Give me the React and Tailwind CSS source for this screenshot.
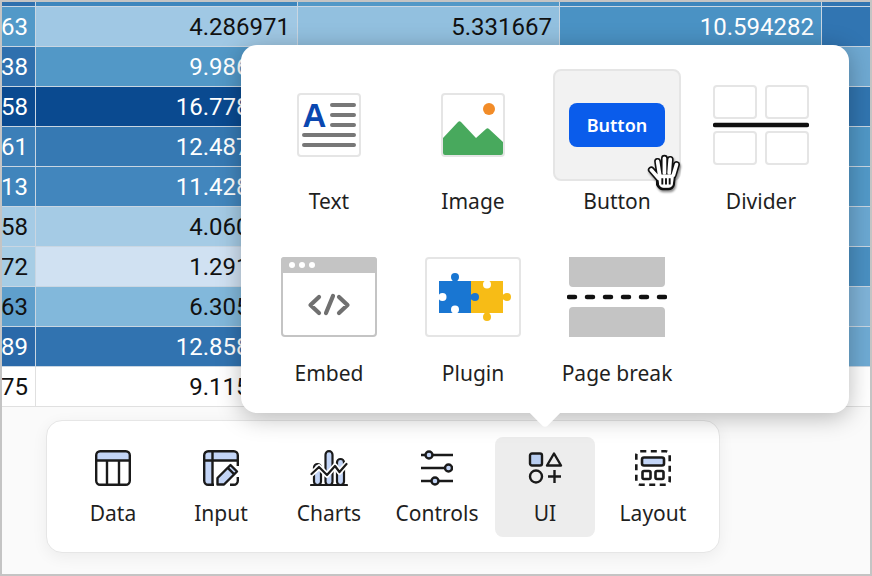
import React from 'react';

const rows = [
  { a: '63', b: '4.286971', c: '5.331667', d: '10.594282', colors: ['#5299c8', '#a0c8e4', '#92c0df', '#4a92c4', '#3175b2'], dark: [1, 0, 0, 1, 1] },
  { a: '38', b: '9.986214', colors: ['#2f70ae', '#5298c7', '#5298c7', '#5298c7', '#6fa9d2'], dark: [1, 1, 1, 1, 1] },
  { a: '58', b: '16.778305', colors: ['#0a4a90', '#0a4a90', '#0a4a90', '#0a4a90', '#3175b0'], dark: [1, 1, 1, 1, 1] },
  { a: '61', b: '12.487120', colors: ['#3c7fb8', '#3679b3', '#3679b3', '#3679b3', '#5097c6'], dark: [1, 1, 1, 1, 1] },
  { a: '13', b: '11.428846', colors: ['#4085bc', '#4286bd', '#4286bd', '#4286bd', '#5299c8'], dark: [1, 1, 1, 1, 1] },
  { a: '58', b: '4.060937', colors: ['#a5cbe5', '#a5cbe5', '#a5cbe5', '#a5cbe5', '#6ba8d2'], dark: [0, 0, 0, 0, 1] },
  { a: '72', b: '1.291573', colors: ['#a7cde5', '#d0e1f2', '#d0e1f2', '#d0e1f2', '#4a90c2'], dark: [0, 0, 0, 0, 1] },
  { a: '63', b: '6.305428', colors: ['#5f9fcc', '#82b8db', '#82b8db', '#82b8db', '#7fb3d8'], dark: [0, 0, 0, 0, 1] },
  { a: '89', b: '12.858061', colors: ['#2a69a9', '#3173b0', '#3173b0', '#3173b0', '#6fabd4'], dark: [1, 1, 1, 1, 1] },
  { a: '75', b: '9.115392', colors: ['#ffffff', '#ffffff', '#ffffff', '#ffffff', '#ffffff'], dark: [0, 0, 0, 0, 0] },
];

const colWidths = ['w-[34px]', 'w-[262px]', 'w-[262px]', 'w-[262px]', 'flex-1'];

const Row = ({ row }) => {
  const values = [row.a, row.b, row.c, row.d, ''];
  const isWhite = row.a === '75';
  return (
    <div className={`flex h-[40px] border-b ${isWhite ? 'border-[#e0e0e0]' : 'border-[#c9d6e2]'}`}>
      {values.map((v, i) => (
        <div
          key={i}
          className={`${colWidths[i]} flex items-center justify-end overflow-hidden whitespace-nowrap pr-[7px] ${i < 4 ? (isWhite ? 'border-r border-[#e0e0e0]' : 'border-r border-[#c9d6e2]') : ''} ${row.dark[i] ? 'text-white' : 'text-[#111111]'}`}
          style={{ backgroundColor: row.colors[i] }}
        >
          {v}
        </div>
      ))}
    </div>
  );
};

const DataIcon = () => (
  <svg width="36" height="36" viewBox="0 0 36 36" fill="none" stroke="#1a1a1a" strokeWidth="2.4">
    <path d="M2 10V5a3.5 3.5 0 0 1 3.5-3.5h25A3.500 3.500 0 0 1 34.500 5v5z" fill="#c3d5f7" stroke="none" />
    <rect x="1.200" y="1.200" width="33.600" height="33.600" rx="4" />
    <path d="M1.200 10.500h33.600M12 10.500v24.300M24 10.500v24.300" />
  </svg>
);

const InputIcon = () => (
  <svg width="36" height="36" viewBox="0 0 36 36" fill="none" stroke="#1a1a1a" strokeWidth="2.400" strokeLinejoin="round">
    <path d="M2 10V4l2-2h27l3 2v6zM2 10h7v24H4l-2-2z" fill="#c3d5f7" stroke="none" />
    <path d="M11 34.800H5.200a4 4 0 0 1-4-4V5.200a4 4 0 0 1 4-4h25.600a4 4 0 0 1 4 4V16" />
    <path d="M34.800 27v3.800a4 4 0 0 1-4 4H27" />
    <path d="M1.200 10.500h33.600M9.500 1.200v33.600" />
    <path d="M14.500 34.500v-6.500L27.500 15l6.500 6.500L21 34.500z" fill="#c3d5f7" />
    <path d="M24.800 17.800l6.500 6.500" />
  </svg>
);

const ChartsIcon = () => (
  <svg width="38" height="36" viewBox="0 0 38 36" fill="none" stroke="#1a1a1a" strokeWidth="2.200" strokeLinejoin="round" strokeLinecap="round">
    <rect x="4" y="14" width="7" height="21" rx="3.500" fill="#c3d5f7" />
    <rect x="15.500" y="1.200" width="7" height="34" rx="3.500" fill="#c3d5f7" />
    <rect x="27" y="9" width="7" height="26" rx="3.500" fill="#c3d5f7" />
    <path d="M1.500 24l7.500-7 8 8 8-9 4.500 6 7-8" stroke="#ffffff" strokeWidth="5.500" />
    <path d="M1.500 24l7.500-7 8 8 8-9 4.500 6 7-8" />
    <path d="M1 35h36" />
  </svg>
);

const ControlsIcon = () => (
  <svg width="32" height="36" viewBox="0 0 32 36" fill="none" stroke="#1a1a1a" strokeWidth="2.400">
    <path d="M0 5h32M0 18h32M0 31h32" />
    <circle cx="8" cy="5" r="3.500" fill="#c3d5f7" />
    <circle cx="27.500" cy="18" r="3.500" fill="#c3d5f7" />
    <circle cx="14" cy="31" r="3.500" fill="#c3d5f7" />
  </svg>
);

const UiIcon = () => (
  <svg width="36" height="36" viewBox="0 0 36 36" fill="none" stroke="#1a1a1a" strokeWidth="2.400" strokeLinejoin="round">
    <rect x="3" y="3.500" width="12" height="12" rx="2" fill="#b8cdf0" />
    <path d="M27 3.500l7 12H20z" />
    <circle cx="9" cy="26.500" r="6" />
    <path d="M21 26.500h13M27.500 20v13" />
  </svg>
);

const LayoutIcon = () => (
  <svg width="36" height="36" viewBox="0 0 36 36" fill="none" stroke="#1a1a1a" strokeWidth="2.600">
    <rect x="1.300" y="1.300" width="33.400" height="33.400" rx="4" strokeDasharray="6 4.500" />
    <rect x="7" y="7.500" width="22" height="8" rx="2" fill="#c3d5f7" />
    <rect x="7.500" y="21" width="8" height="8" rx="1.500" />
    <rect x="20.500" y="21" width="8" height="8" rx="1.500" />
  </svg>
);

const TextIcon = () => (
  <svg width="64" height="64" viewBox="0 0 64 64" fill="none">
    <rect x="1" y="1" width="62" height="62" rx="3" fill="#ffffff" stroke="#e5e5e5" strokeWidth="2" />
    <text x="5.500" y="34" fontFamily="Liberation Sans" fontWeight="700" fontSize="33" fill="#0a47b0">A</text>
    <path d="M35 12h22M35 22h22M35 32h22M7 42h50M7 52h50" stroke="#777777" strokeWidth="4" strokeLinecap="round" />
  </svg>
);

const ImageIcon = () => (
  <svg width="64" height="64" viewBox="0 0 64 64" fill="none">
    <rect x="1" y="1" width="62" height="62" rx="3" fill="#ffffff" stroke="#e5e5e5" strokeWidth="2" />
    <circle cx="48" cy="16" r="6" fill="#f28c28" />
    <path d="M2 45l15-16q1.500-1.500 3 0l15 16 10-9q1.500-1.500 3 0l14 13v11a2 2 0 0 1-2 2H4a2 2 0 0 1-2-2z" fill="#48a95d" />
  </svg>
);

const DividerIcon = () => (
  <svg width="96" height="80" viewBox="0 0 96 80" fill="none">
    <g fill="#ffffff" stroke="#e5e5e5" strokeWidth="2">
      <rect x="1" y="1" width="42" height="32" rx="3" />
      <rect x="53" y="1" width="42" height="32" rx="3" />
      <rect x="1" y="47" width="42" height="32" rx="3" />
      <rect x="53" y="47" width="42" height="32" rx="3" />
    </g>
    <path d="M2 40h92" stroke="#111111" strokeWidth="4.500" strokeLinecap="round" />
  </svg>
);

const EmbedIcon = () => (
  <svg width="96" height="80" viewBox="0 0 96 80" fill="none">
    <rect x="1" y="1" width="94" height="78" rx="3" fill="#ffffff" stroke="#c4c4c4" strokeWidth="2" />
    <path d="M0 16V3a3 3 0 0 1 3-3h90a3 3 0 0 1 3 3v13z" fill="#c4c4c4" />
    <circle cx="11" cy="8" r="3" fill="#ffffff" />
    <circle cx="21" cy="8" r="3" fill="#ffffff" />
    <circle cx="31" cy="8" r="3" fill="#ffffff" />
    <path d="M38 40l-8.500 8 8.500 8M45 56l7-17M58 40l8.500 8-8.500 8" stroke="#707070" strokeWidth="4.200" strokeLinecap="round" strokeLinejoin="round" />
  </svg>
);

const PluginIcon = () => (
  <svg width="96" height="80" viewBox="0 0 96 80" fill="none">
    <rect x="1" y="1" width="94" height="78" rx="3" fill="#ffffff" stroke="#e5e5e5" strokeWidth="2" />
    {/* yellow piece */}
    <rect x="46" y="24" width="32" height="32" fill="#f7bc16" />
    <rect x="76" y="37.500" width="6" height="5" fill="#f7bc16" />
    <circle cx="82" cy="40" r="4" fill="#f7bc16" />
    <rect x="59.500" y="54" width="5" height="6" fill="#f7bc16" />
    <circle cx="62" cy="60" r="4" fill="#f7bc16" />
    <rect x="60" y="23" width="4" height="4" fill="#ffffff" />
    <circle cx="62" cy="27.500" r="4" fill="#ffffff" />
    {/* blue piece */}
    <rect x="14" y="24" width="32" height="32" fill="#1976d2" />
    <rect x="27.500" y="20" width="5" height="6" fill="#1976d2" />
    <circle cx="30" cy="20" r="4" fill="#1976d2" />
    <rect x="44" y="37.500" width="6" height="5" fill="#1976d2" />
    <circle cx="50" cy="40" r="4" fill="#1976d2" />
    <rect x="13" y="38" width="4" height="4" fill="#ffffff" />
    <circle cx="17.500" cy="40" r="4" fill="#ffffff" />
    <rect x="28" y="53" width="4" height="4" fill="#ffffff" />
    <circle cx="30" cy="52.500" r="4" fill="#ffffff" />
  </svg>
);

const PageBreakIcon = () => (
  <svg width="100" height="80" viewBox="0 0 100 80" fill="none">
    <path d="M2 0h96v26a4 4 0 0 1-4 4H6a4 4 0 0 1-4-4z" fill="#c4c4c4" />
    <path d="M2 54a4 4 0 0 1 4-4h88a4 4 0 0 1 4 4v26H2z" fill="#c4c4c4" />
    <path d="M2 40h6M20 40h6M38 40h6M56 40h6M74 40h6M92 40h6" stroke="#111111" strokeWidth="4.500" strokeLinecap="round" />
  </svg>
);

const HandCursor = () => (
  <svg width="38" height="40" viewBox="0 0 36 38" fill="none" className="drop-shadow-[1px_2px_1px_rgba(0,0,0,0.45)]" strokeLinecap="round" strokeLinejoin="round">
    <path d="M4 16l7 8M12 21l-2-13M16.500 19V5M21 19l1-13M25 21l3-10" stroke="#111111" strokeWidth="6.500" />
    <path d="M10 19h16l-1 11q-1 4-5 4h-5q-3 0-5-4z" fill="#ffffff" stroke="#111111" strokeWidth="3" />
    <path d="M4 16l7 8M12 21l-2-13M16.500 19V5M21 19l1-13M25 21l3-10" stroke="#ffffff" strokeWidth="3.500" />
    <path d="M10.500 22h15l-1 8q-1 3-4 3h-5q-3 0-4-3z" fill="#ffffff" />
    <path d="M14.500 24v6M18 24v6M21.500 24v6" stroke="#111111" strokeWidth="1.800" strokeLinecap="butt" />
  </svg>
);

const widgets = [
  { label: 'Text', icon: <TextIcon /> },
  { label: 'Image', icon: <ImageIcon /> },
  {
    label: 'Button',
    active: true,
    icon: (
      <div className="flex h-[44px] w-[96px] items-center justify-center rounded-lg bg-[#0a5ceb] text-[18px] font-semibold text-white">Button</div>
    ),
  },
  { label: 'Divider', icon: <DividerIcon /> },
  { label: 'Embed', icon: <EmbedIcon /> },
  { label: 'Plugin', icon: <PluginIcon /> },
  { label: 'Page break', icon: <PageBreakIcon /> },
];

const tools = [
  { label: 'Data', icon: <DataIcon /> },
  { label: 'Input', icon: <InputIcon /> },
  { label: 'Charts', icon: <ChartsIcon /> },
  { label: 'Controls', icon: <ControlsIcon /> },
  { label: 'UI', icon: <UiIcon />, active: true },
  { label: 'Layout', icon: <LayoutIcon /> },
];

export default function App() {
  return (
    <div className="relative h-[576px] w-[872px] overflow-hidden border-2 border-[#c4c4c4] bg-[#fafafa] font-['Noto_Sans',sans-serif] text-[#1f1f1f]">
      {/* Heatmap table behind the popup */}
      <div className="font-['Roboto',sans-serif] text-[24px]">
        <div className="flex h-[5px] border-b border-[#c9d6e2]">
          <div className="w-[34px] border-r border-[#c9d6e2] bg-[#2f70ae]" />
          <div className="w-[262px] border-r border-[#c9d6e2] bg-[#3d86bd]" />
          <div className="w-[262px] border-r border-[#c9d6e2] bg-[#5298c7]" />
          <div className="w-[262px] border-r border-[#c9d6e2] bg-[#3d86bd]" />
          <div className="flex-1 bg-[#3175b2]" />
        </div>
        {rows.map((row, i) => (
          <Row key={i} row={row} />
        ))}
      </div>

      {/* Bottom toolbar */}
      <div className="ml-[44px] mt-[13px] flex h-[133px] w-[674px] gap-2 rounded-2xl border border-[#e6e6e6] bg-white px-[16px] py-[16px] shadow-[0_4px_16px_rgba(0,0,0,0.06)]">
        {tools.map((t) => (
          <div key={t.label} className={`flex h-[100px] w-[100px] flex-col items-center rounded-lg pt-[13px] ${t.active ? 'bg-[#ededed]' : ''}`}>
            <div className="flex h-[36px] items-center justify-center">{t.icon}</div>
            <div className="mt-[13px] text-[21px] leading-[28px]">{t.label}</div>
          </div>
        ))}
      </div>

      {/* UI popup */}
      <div className="absolute left-[239px] top-[43px] w-[608px] rounded-2xl bg-white pb-[26px] pl-[24px] pr-[24px] pt-[24px] shadow-[0_4px_24px_rgba(0,0,0,0.28)]">
        <div className="absolute left-[289px] top-[347px] h-[30px] w-[30px] rotate-45 rounded-[4px] bg-white" />
        <div className="relative grid grid-cols-4 gap-x-4 gap-y-[26px]">
          {widgets.map((w) => (
            <div key={w.label} className="relative flex w-[128px] flex-col items-center">
              <div className={`flex h-[112px] w-[128px] items-center justify-center rounded-lg ${w.active ? 'border-2 border-[#e5e5e5] bg-[#f2f2f2]' : ''}`}>
                {w.icon}
              </div>
              <div className="mt-[6px] whitespace-nowrap text-[21px] leading-[28px]">{w.label}</div>
              {w.active && (
                <div className="absolute left-[94px] top-[84px]">
                  <HandCursor />
                </div>
              )}
            </div>
          ))}
        </div>
      </div>
    </div>
  );
}
